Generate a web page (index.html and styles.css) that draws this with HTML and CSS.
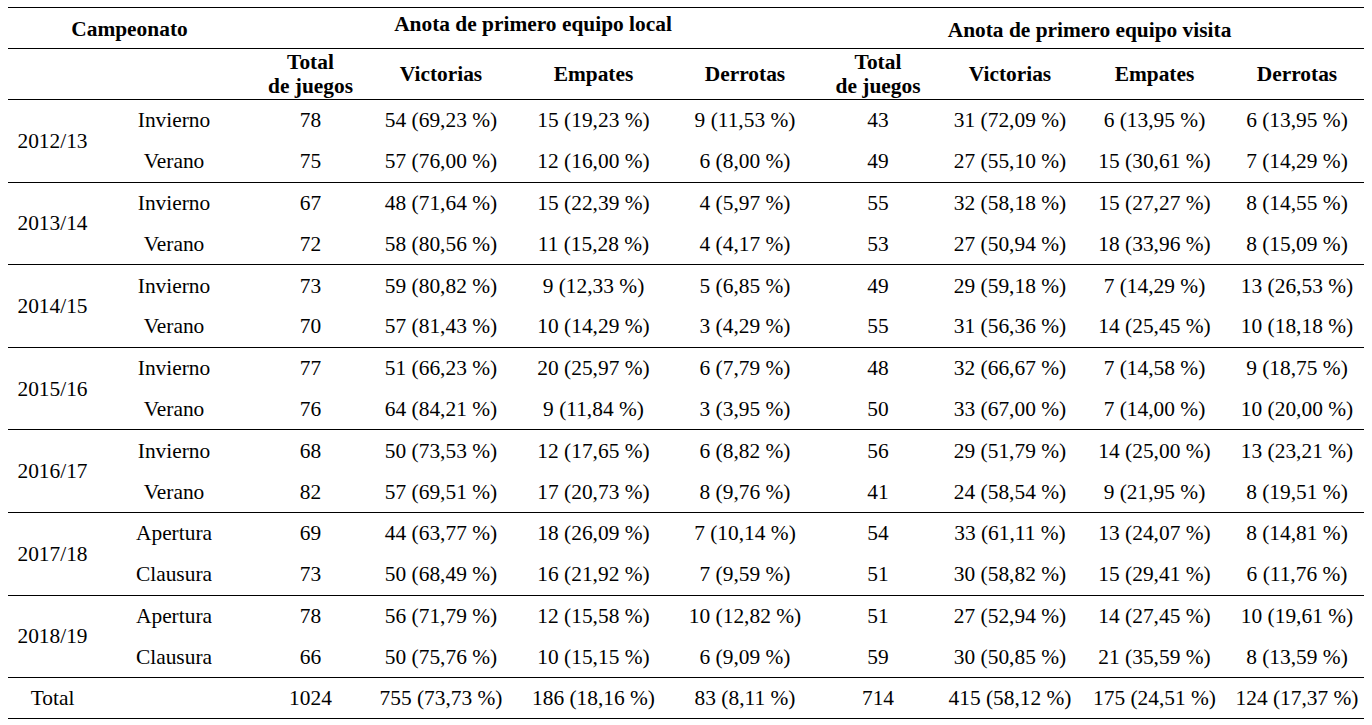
FILE: index.html
```html
<!DOCTYPE html>
<html lang="es">
<head>
<meta charset="utf-8">
<title>Anota de primero</title>
<link rel="stylesheet" href="styles.css">
</head>
<body>
<table class="stats">
  <colgroup>
    <col class="c1"><col class="c2"><col class="c3"><col class="c4"><col class="c5">
    <col class="c6"><col class="c7"><col class="c8"><col class="c9"><col class="c10">
  </colgroup>
  <thead>
    <tr class="h1">
      <th colspan="2" class="camp">Campeonato</th>
      <th colspan="4" class="local">Anota de primero equipo local</th>
      <th colspan="4" class="visita">Anota de primero equipo visita</th>
    </tr>
    <tr class="h2">
      <th></th><th></th>
      <th>Total<br>de juegos</th><th>Victorias</th><th>Empates</th><th>Derrotas</th>
      <th>Total<br>de juegos</th><th>Victorias</th><th>Empates</th><th>Derrotas</th>
    </tr>
  </thead>
  <tbody>
    <tr class="first"><td rowspan="2" class="year">2012/13</td><td>Invierno</td><td>78</td><td>54 (69,23 %)</td><td>15 (19,23 %)</td><td>9 (11,53 %)</td><td>43</td><td>31 (72,09 %)</td><td>6 (13,95 %)</td><td>6 (13,95 %)</td></tr>
    <tr><td>Verano</td><td>75</td><td>57 (76,00 %)</td><td>12 (16,00 %)</td><td>6 (8,00 %)</td><td>49</td><td>27 (55,10 %)</td><td>15 (30,61 %)</td><td>7 (14,29 %)</td></tr>

    <tr class="first"><td rowspan="2" class="year">2013/14</td><td>Invierno</td><td>67</td><td>48 (71,64 %)</td><td>15 (22,39 %)</td><td>4 (5,97 %)</td><td>55</td><td>32 (58,18 %)</td><td>15 (27,27 %)</td><td>8 (14,55 %)</td></tr>
    <tr><td>Verano</td><td>72</td><td>58 (80,56 %)</td><td>11 (15,28 %)</td><td>4 (4,17 %)</td><td>53</td><td>27 (50,94 %)</td><td>18 (33,96 %)</td><td>8 (15,09 %)</td></tr>

    <tr class="first"><td rowspan="2" class="year">2014/15</td><td>Invierno</td><td>73</td><td>59 (80,82 %)</td><td>9 (12,33 %)</td><td>5 (6,85 %)</td><td>49</td><td>29 (59,18 %)</td><td>7 (14,29 %)</td><td>13 (26,53 %)</td></tr>
    <tr><td>Verano</td><td>70</td><td>57 (81,43 %)</td><td>10 (14,29 %)</td><td>3 (4,29 %)</td><td>55</td><td>31 (56,36 %)</td><td>14 (25,45 %)</td><td>10 (18,18 %)</td></tr>

    <tr class="first"><td rowspan="2" class="year">2015/16</td><td>Invierno</td><td>77</td><td>51 (66,23 %)</td><td>20 (25,97 %)</td><td>6 (7,79 %)</td><td>48</td><td>32 (66,67 %)</td><td>7 (14,58 %)</td><td>9 (18,75 %)</td></tr>
    <tr><td>Verano</td><td>76</td><td>64 (84,21 %)</td><td>9 (11,84 %)</td><td>3 (3,95 %)</td><td>50</td><td>33 (67,00 %)</td><td>7 (14,00 %)</td><td>10 (20,00 %)</td></tr>

    <tr class="first"><td rowspan="2" class="year">2016/17</td><td>Invierno</td><td>68</td><td>50 (73,53 %)</td><td>12 (17,65 %)</td><td>6 (8,82 %)</td><td>56</td><td>29 (51,79 %)</td><td>14 (25,00 %)</td><td>13 (23,21 %)</td></tr>
    <tr><td>Verano</td><td>82</td><td>57 (69,51 %)</td><td>17 (20,73 %)</td><td>8 (9,76 %)</td><td>41</td><td>24 (58,54 %)</td><td>9 (21,95 %)</td><td>8 (19,51 %)</td></tr>

    <tr class="first"><td rowspan="2" class="year">2017/18</td><td>Apertura</td><td>69</td><td>44 (63,77 %)</td><td>18 (26,09 %)</td><td>7 (10,14 %)</td><td>54</td><td>33 (61,11 %)</td><td>13 (24,07 %)</td><td>8 (14,81 %)</td></tr>
    <tr><td>Clausura</td><td>73</td><td>50 (68,49 %)</td><td>16 (21,92 %)</td><td>7 (9,59 %)</td><td>51</td><td>30 (58,82 %)</td><td>15 (29,41 %)</td><td>6 (11,76 %)</td></tr>

    <tr class="first"><td rowspan="2" class="year">2018/19</td><td>Apertura</td><td>78</td><td>56 (71,79 %)</td><td>12 (15,58 %)</td><td>10 (12,82 %)</td><td>51</td><td>27 (52,94 %)</td><td>14 (27,45 %)</td><td>10 (19,61 %)</td></tr>
    <tr><td>Clausura</td><td>66</td><td>50 (75,76 %)</td><td>10 (15,15 %)</td><td>6 (9,09 %)</td><td>59</td><td>30 (50,85 %)</td><td>21 (35,59 %)</td><td>8 (13,59 %)</td></tr>
  </tbody>
  <tfoot>
    <tr class="total"><td>Total</td><td></td><td>1024</td><td>755 (73,73 %)</td><td>186 (18,16 %)</td><td>83 (8,11 %)</td><td>714</td><td>415 (58,12 %)</td><td>175 (24,51 %)</td><td>124 (17,37 %)</td></tr>
  </tfoot>
</table>
</body>
</html>
```

FILE: styles.css
```css
html, body {
  background: #ffffff;
}
body {
  margin: 7px 8px 0 8px;
  font-family: "Liberation Serif", "Times New Roman", serif;
  font-size: 21.4px;
  color: #000000;
}
.stats {
  border-collapse: collapse;
  table-layout: fixed;
  width: 1356px;
}
.c1 { width: 89px; }
.c2 { width: 154px; }
.c3 { width: 119px; }
.c4 { width: 142px; }
.c5 { width: 163px; }
.c6 { width: 140px; }
.c7 { width: 126px; }
.c8 { width: 138px; }
.c9 { width: 151px; }
.c10 { width: 134px; }
.stats th,
.stats td {
  padding: 0;
  text-align: center;
  vertical-align: middle;
  white-space: nowrap;
  line-height: 24px;
}
.stats th {
  font-weight: bold;
}
.h1 {
  height: 41px;
}
.h1 th {
  vertical-align: top;
  border-top: 1px solid #000;
  border-bottom: 1px solid #000;
}
.h1 .camp { padding-top: 9px; }
.h1 .local { padding-top: 4px; }
.h1 .visita { padding-top: 10px; }
.h2 {
  height: 51px;
}
.h2 th {
  border-bottom: 1px solid #000;
}
tbody tr {
  height: 41.3px;
}
tbody tr.first td {
  border-top: 1px solid #000;
}
.total {
  height: 41px;
}
.total td {
  border-top: 1px solid #000;
  border-bottom: 1px solid #000;
}
```
